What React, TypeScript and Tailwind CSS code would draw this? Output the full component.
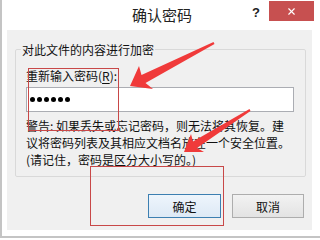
import { X } from "lucide-react";

const CJK = "font-['Noto_Sans_CJK_SC','Noto_Sans',sans-serif]";

export default function App() {
  return (
    <div
      className={`relative w-[320px] h-[238px] overflow-hidden bg-white border-l-2 border-b-2 border-[#c4c4c4] ${CJK} text-[#111]`}
    >
      {/* Title bar */}
      <div className="grid grid-cols-[1fr_auto_1fr] h-[30px]">
        <div />
        <div className="self-center text-[15px] leading-[20px] text-[#222] pl-[2px]">确认密码</div>
        <div className="flex justify-end items-start pr-[6px]">
          <span className="mt-[6px] mr-[9px] text-[13px] leading-[14px] font-bold text-[#222] font-['Liberation_Sans',sans-serif]">
            ?
          </span>
          <button className="mt-[1px] w-[45px] h-[20px] bg-[#c75050] flex items-center justify-center">
            <X className="w-[11px] h-[11px] text-white" strokeWidth={2.5} />
          </button>
        </div>
      </div>

      {/* Dialog body */}
      <div className="ml-[5px] mr-[8px] h-[200px] bg-[#f0f0f0] flex flex-col">
        <fieldset className="mt-[11px] ml-[8px] mr-[6px] border border-[#d9d9d9] rounded-[2px] p-0 min-w-0">
          <legend className="ml-[5px] px-[1px] text-[12px] leading-[17px]">对此文件的内容进行加密</legend>
          <div className="pl-[10px] pr-[11px] pb-[8px] text-[12px] leading-[17px]">
            <div className="mt-[9px]">
              重新输入密码(<span className="underline underline-offset-2">R</span>):
            </div>
            <div className="mt-[3px] h-[25px] bg-white border border-[#abadb3] flex items-center gap-[2px] pl-[3px]">
              {[0, 1, 2, 3, 4, 5].map((i) => (
                <span key={i} className="w-[5px] h-[5px] rounded-full bg-black" />
              ))}
            </div>
            <div className="mt-[5px]">
              <div>警告: 如果丢失或忘记密码，则无法将其恢复。建</div>
              <div>议将密码列表及其相应文档名放在一个安全位置。</div>
              <div>(请记住，密码是区分大小写的。)</div>
            </div>
          </div>
        </fieldset>

        <div className="mt-[17px] flex justify-end gap-[11px] mr-[8px]">
          <button className="w-[73px] h-[24px] border border-[#3c7fb1] bg-gradient-to-b from-[#eef5fc] to-[#dde9f5] text-[12px] leading-[17px]">
            确定
          </button>
          <button className="w-[72px] h-[24px] border border-[#adadad] bg-gradient-to-b from-[#f2f2f2] to-[#e3e3e3] text-[12px] leading-[17px]">
            取消
          </button>
        </div>
      </div>

      {/* Annotations */}
      <div className="absolute left-[26px] top-[68px] w-[91px] h-[63px] border border-[#c84848]" />
      <div className="absolute left-[88px] top-[166px] w-[134px] h-[60px] border border-[#c84848]" />
      <svg className="absolute left-0 top-0" width="320" height="238" viewBox="0 0 320 238">
        <polygon
          fill="#f03a3a"
          points="128,86 151,89 143.5,83 212.5,44 211.5,42 139.5,75 137,66"
        />
        <polygon
          fill="#f03a3a"
          points="182,152 202,152 195,148 248.5,111 247.5,109 191,141.6 189,134"
        />
      </svg>
    </div>
  );
}
